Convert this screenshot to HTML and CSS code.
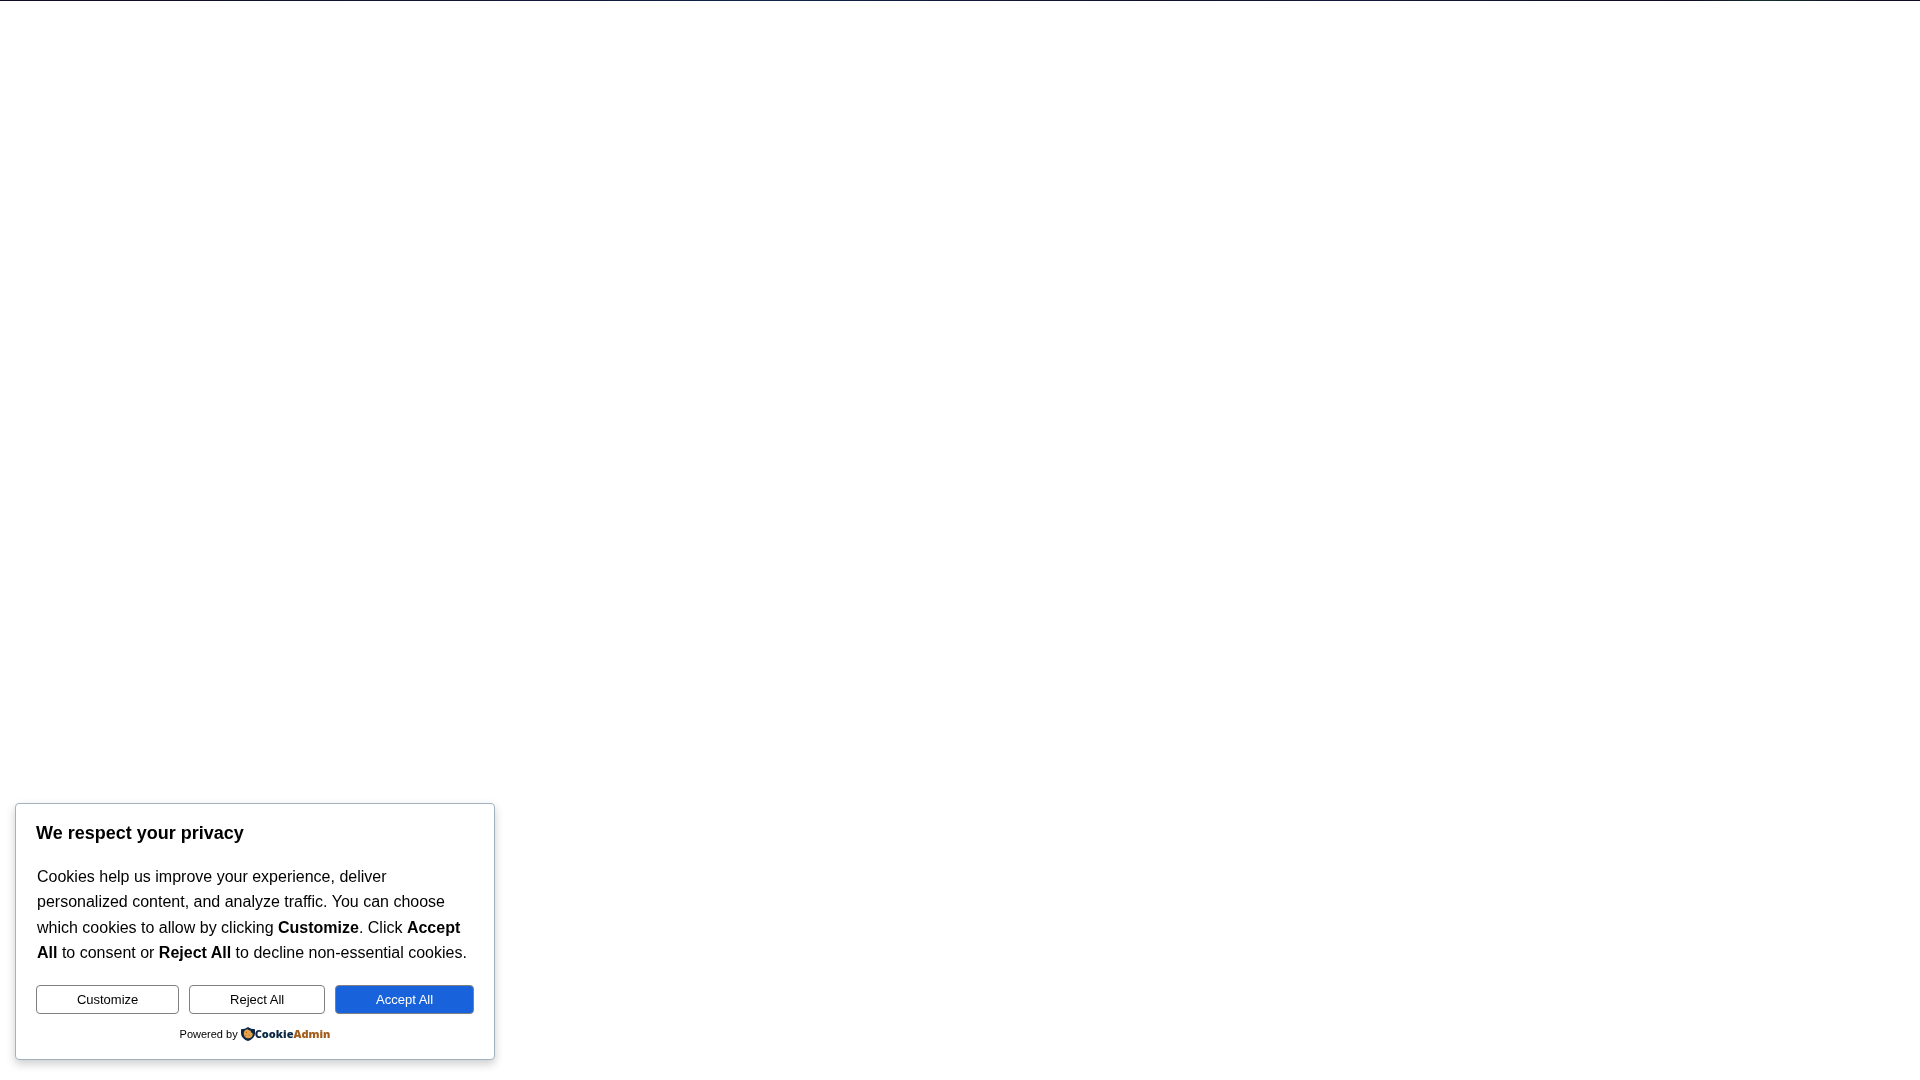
FILE: index.html
```html
<!DOCTYPE html>
<html lang="en">
<head>
<meta charset="utf-8">
<meta name="viewport" content="width=device-width, initial-scale=1">
<title>Privacy</title>
<link rel="stylesheet" href="styles.css">
</head>
<body>
<header class="top-strip"></header>
<section class="consent" role="dialog" aria-labelledby="consent-title">
  <h2 class="consent-title" id="consent-title">We respect your privacy</h2>
  <p class="consent-text">Cookies help us improve your experience, deliver personalized content, and analyze traffic. You can choose which cookies to allow by clicking <strong>Customize</strong>. Click <strong>Accept All</strong> to consent or <strong>Reject All</strong> to decline non-essential cookies.</p>
  <div class="consent-actions">
    <button class="btn" type="button">Customize</button>
    <button class="btn" type="button">Reject All</button>
    <button class="btn btn-primary" type="button">Accept All</button>
  </div>
  <div class="powered">
    <span>Powered by</span>
    <a class="brand" href="#">
      <svg class="brand-icon" viewBox="0 0 26 26" aria-hidden="true">
        <path fill="#0b2743" d="M13 0C9 3 5 4 0 4v7c0 7 5 12 13 15 8-3 13-8 13-15V4C21 4 17 3 13 0z"/>
        <path fill="#e5a24d" d="M12 4a8.500 8.500 0 1 0 10 10l-1-3-2-1-1-3-3-1z"/>
        <circle cx="10" cy="10" r="1" fill="#a96322"/>
        <circle cx="15" cy="15" r="1" fill="#a96322"/>
        <circle cx="9" cy="16" r="1" fill="#a96322"/>
      </svg>
      <span class="brand-name">Cookie<span class="brand-accent">Admin</span></span>
    </a>
  </div>
</section>
</body>
</html>
```
FILE: styles.css
```css
* {
  box-sizing: border-box;
}

body {
  margin: 0;
  min-height: 100vh;
  background: #fff;
  color: #000;
  font-family: "Liberation Sans", Arial, sans-serif;
  font-size: 16px;
}

.top-strip {
  height: 1px;
  background: linear-gradient(to right, #0e0b24, #11183a 30%, #10264b 40%, #11183a 50%, #10102e 60%, #11183a 70%, #0e0b24 88%, #14302f 92%, #0e0b24 97%);
}

.consent {
  position: fixed;
  left: 15px;
  bottom: 20px;
  width: 480px;
  max-width: calc(100% - 30px);
  padding: 16px 20px;
  border: 1px solid #a2b1bf;
  border-radius: 4px;
  background: #fff;
  box-shadow: 0 4px 10px rgba(0, 0, 0, 0.2);
}

.consent-title {
  margin: 0 0 18px;
  font-size: 18px;
  line-height: 26px;
}

.consent-text {
  margin: 0 0 19px;
  padding: 0 1px;
  line-height: 1.6;
}

.consent-actions {
  display: flex;
  gap: 10px;
}

.btn {
  flex: 1 1 auto;
  padding: 6px;
  border: 1px solid #808080;
  border-radius: 4px;
  background: #fff;
  color: #000;
  font: inherit;
  font-size: 13px;
  line-height: 15px;
}

.btn-primary {
  background: #1863dc;
  color: #fff;
}

.powered {
  display: flex;
  align-items: center;
  justify-content: center;
  gap: 3px;
  margin-top: 10px;
  font-size: 11px;
  line-height: 18px;
}

.brand {
  display: flex;
  align-items: center;
  padding-top: 1px;
  color: #0b2743;
  text-decoration: none;
}

.brand-icon {
  width: 14px;
  height: 14px;
}

.brand-name {
  font-family: "Open Sans", sans-serif;
  font-size: 11px;
  font-weight: 800;
}

.brand-accent {
  color: #a15c1c;
}
```
